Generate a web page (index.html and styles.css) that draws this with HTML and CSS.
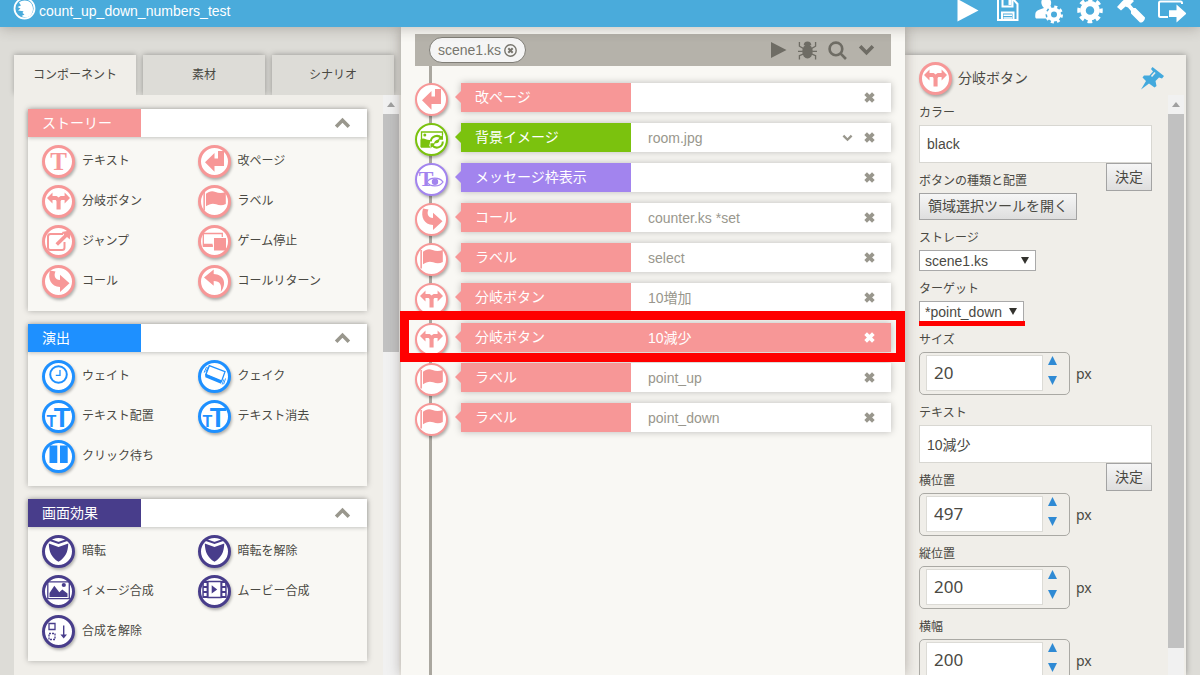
FILE: index.html
```html
<!DOCTYPE html>
<html lang="ja">
<head>
<meta charset="utf-8">
<title>count_up_down_numbers_test</title>
<link rel="stylesheet" href="styles.css">
</head>
<body>
<svg class="defs" aria-hidden="true">
  <symbol id="i-page" viewBox="3 3 27 27"><path d="M7 17.3L16.5 8V13.5H20V6H26V21H16.5V26.7Z"/></symbol>
  <symbol id="i-branch" viewBox="3 3 27 27"><path d="M5 13L10.5 7.6V11H13.6c1.3 0 2.2.7 3 1.6.8-.9 1.700-1.600 3-1.600H22.600V7.600L28 13l-5.400 5.400V15H20.200c-1.100 0-1.600.6-1.600 1.600V24.500H14.500V16.600c0-1-.5-1.600-1.600-1.600H10.500v3.400Z"/></symbol>
  <symbol id="i-flag" viewBox="3 3 27 27"><path d="M5.400 7H6.900V25.500H5.400ZM8 8.800c3-2.600 6.200-3.200 9.500-1.800 3.400 1.300 6.500 1.300 10.300 0V19c-3.400 1.700-6.600 1.400-9.600.3-3.600-1.300-6.800-.4-10.200 2Z"/></symbol>
  <symbol id="i-jump" viewBox="3 3 27 27"><path class="line" d="M21 9H8.500a2.500 2.500 0 0 0-2.500 2.500V22.500a2.500 2.500 0 0 0 2.500 2.500H20a2.500 2.500 0 0 0 2.500-2.500V17"/><path d="M13.500 18.300L22.200 9.800L19.800 7L29 5.300L27.800 14.500L25 12L16 20.800Z"/></symbol>
  <symbol id="i-stop" viewBox="3 3 27 27"><path class="thin" d="M24.300 12V8.500H5.300V21H15"/><path d="M5 18.800H14.600V22H5ZM16 13H28V25.500H16Z"/></symbol>
  <symbol id="i-call" viewBox="3 3 27 27"><path d="M8 5.500C5.500 14 9 21.500 18 22V27L27.500 18.300L18 9.700V15C13 15 11.500 10.500 13.500 6.500Z"/></symbol>
  <symbol id="i-return" viewBox="3 3 27 27"><path d="M6 12.500L15.700 4.500V9C25.500 9.500 29.500 18 22.800 27C24 19.500 22 16 15.700 16V20.800Z"/></symbol>
  <symbol id="i-clock" viewBox="3 3 27 27"><circle class="line" cx="16.500" cy="14.500" r="8.300"/><path class="thin" d="M18 10V15.400H13.800"/></symbol>
  <symbol id="i-quake" viewBox="3 3 27 27"><path class="thin" d="M11.300 5.700L27 11.600L23.500 21.500L7.800 14.800Z"/><path d="M7.300 13.400L24.200 20.400L23 23.800L7.300 17.200ZM5.600 12.500L8.200 6.800L8.900 7.200L6.500 12.800ZM7.400 12L9.900 6.500L10.500 6.800L8.100 12.500ZM26 24.500L28 18.500L27.300 18.300L25.200 24ZM24.300 24.800L26.300 19.500L25.600 19.200L23.600 24.500Z"/></symbol>
  <symbol id="i-pause" viewBox="3 3 27 27"><path d="M7.500 5.500H15.300V23H7.500ZM18 5.500H25.700V23H18Z"/></symbol>
  <symbol id="i-shield" viewBox="3 3 27 27"><path class="line" d="M8 5L16.500 8L25 5"/><path d="M6.800 8.500L16.500 12L26.300 8.500C26 17 23.500 22.500 16.500 26.800C9.500 22.500 7 17 6.800 8.500Z"/></symbol>
  <symbol id="i-image" viewBox="3 3 27 27"><path class="thin" d="M5.800 6.800H27.300V23.600H5.800Z"/><path d="M7.500 22V18L12.300 10.800L17.300 17.200L20.300 14.500L25.500 18.500V22Z"/><circle cx="21.800" cy="10" r="2.100"/></symbol>
  <symbol id="i-movie" viewBox="3 3 27 27"><path class="thin" d="M10 6.500H23V22.500H10Z"/><path fill-rule="evenodd" d="M4.300 6H10V23H4.300ZM5.800 8V11H8.600V8ZM5.800 13V16H8.600V13ZM5.800 18V21H8.600V18ZM23 6H28.700V23H23ZM24.400 8V11H27.200V8ZM24.400 13V16H27.200V13ZM24.400 18V21H27.200V18ZM13.700 10.200L19.200 14.400L13.700 18.600Z"/></symbol>
  <symbol id="i-remove" viewBox="3 3 27 27"><path class="thin" d="M7 8.500H13V14.500H7Z"/><path class="thin" stroke-dasharray="2 1" d="M7 18.500H13V24.500H7Z"/><path d="M21 10.500H22.400V19.500H25L21.700 23.500L18.400 19.500H21Z"/></symbol>
  <symbol id="i-bg" viewBox="3 3 27 27"><path class="thin" d="M15 24H6.500V9H27.500V12"/><circle cx="9.800" cy="12" r="1.500"/><path d="M5.500 16.500C9 14 11 17.500 15 17V19.500L14 24H5.500Z"/><path class="line" d="M15.800 18.500a6 6 0 0 1 10.500-3.500M27.800 18.500a6 6 0 0 1-10.500 4"/><path d="M28 11.500V16.800H22.500ZM15.500 25.500V20.300H20.500Z"/><path d="M19 20c1-3 3-3.500 5.500-3.500c0 3-2 4.500-5.500 3.500Z"/></symbol>
  <symbol id="i-up" viewBox="0 0 16 11"><path class="heavy" d="M2 9L8 3L14 9"/></symbol>
  <symbol id="i-down" viewBox="0 0 16 11"><path class="heavy" d="M2 2L8 8L14 2"/></symbol>
  <symbol id="i-x" viewBox="0 0 10 10"><path class="heavy" d="M1.500 1.500L8.500 8.500M8.500 1.500L1.500 8.500"/></symbol>
</svg>

<div class="app">
  <header class="topbar">
    <h1 class="project">
      <svg class="logo" viewBox="0 0 24 22" aria-hidden="true"><circle cx="11.500" cy="8.500" r="10" fill="none" stroke="#fff" stroke-width="1.800"/><path d="M6 2.500C9 0 14-.5 18 3C21 7 20.500 13 17 16C14 18 11 17.500 8.500 16L11.500 14.500L9.500 13L10.500 11.200L5 10.500L7.500 8.500L4.500 7L8 5.500Z" fill="#fff"/></svg>
      <span>count_up_down_numbers_test</span>
    </h1>
    <nav class="tools" aria-label="ツール">
      <button type="button" aria-label="再生"><svg viewBox="0 0 28 24"><path d="M4.500-1L25.500 10.500L4.500 21.500Z"/></svg></button>
      <button type="button" aria-label="保存"><svg viewBox="0 0 28 24"><path class="w" d="M4-1H19L23.500 4V20H4Z"/><path class="w" d="M8 20V12.500H19.500V20M8.500-1V6.500H18.500V-1"/><path d="M14.500 0H17.500V5H14.500ZM9.500 14.500H18V16H9.500ZM9.500 17.300H18V18.700H9.500Z"/></svg></button>
      <button type="button" aria-label="ユーザー設定"><svg viewBox="0 0 28 24"><path d="M9 8C5.500 5 5-1 10-3C15-2 18 1 15 7L13 9C11 12 12 16 14 18.500H2C0 18.500 0 17 .5 13C1.500 10 5 9.500 9 8Z"/><g transform="translate(19 14.500)"><circle r="8.500" fill="#4aabdb"/><circle r="5" fill="none" stroke="#fff" stroke-width="4"/><circle r="7.500" fill="none" stroke="#fff" stroke-width="3" stroke-dasharray="3 2.890"/></g></svg></button>
      <button type="button" aria-label="設定"><svg viewBox="0 0 28 24"><g transform="translate(14 10.500)"><circle r="7" fill="none" stroke="#fff" stroke-width="5.500"/><circle r="11" fill="none" stroke="#fff" stroke-width="3.500" stroke-dasharray="4.700 3.940" stroke-dashoffset="2.350"/></g></svg></button>
      <button type="button" aria-label="ビルド"><svg viewBox="0 0 28 24"><path d="M0 7L5 1.500L11-4L17 1L13.500 4.500L16.500 8L18.500 8L28 17.500C28 20.500 25.500 23 23 22.500L14 13.500V11L11 7.500L8.500 6.500L4 10.500Z"/></svg></button>
      <button type="button" aria-label="終了"><svg viewBox="0 0 28 24"><path class="w" d="M10 17H2.500C1.500 17 1 16.500 1 15.500V3C1 2 1.500 1.500 2.500 1.500H22.500C23.500 1.500 24 2 24 3V4"/><path d="M11 10.300H18.500V4.500L28.500 13.500L18.500 22.500V17H11Z"/></svg></button>
    </nav>
  </header>

  <main class="workspace">
    <section class="palette" aria-label="コンポーネント">
      <div class="tabs" role="tablist">
        <button type="button" class="tab tab-active" role="tab" aria-selected="true">コンポーネント</button>
        <button type="button" class="tab" role="tab" aria-selected="false">素材</button>
        <button type="button" class="tab" role="tab" aria-selected="false">シナリオ</button>
      </div>
      <div class="palette-body">
        <div class="groups">
          <section class="group story">
            <div class="group-head"><h2>ストーリー</h2><button type="button" aria-label="閉じる"><svg class="chev"><use href="#i-up"/></svg></button></div>
            <ul class="items">
              <li><span class="badge"><svg viewBox="3 3 27 27"><text class="serif-t" x="16.500" y="24.500" text-anchor="middle" font-size="25">T</text></svg></span>テキスト</li>
              <li><span class="badge"><svg><use href="#i-page"/></svg></span>改ページ</li>
              <li><span class="badge"><svg><use href="#i-branch"/></svg></span>分岐ボタン</li>
              <li><span class="badge"><svg><use href="#i-flag"/></svg></span>ラベル</li>
              <li><span class="badge"><svg><use href="#i-jump"/></svg></span>ジャンプ</li>
              <li><span class="badge"><svg><use href="#i-stop"/></svg></span>ゲーム停止</li>
              <li><span class="badge"><svg><use href="#i-call"/></svg></span>コール</li>
              <li><span class="badge"><svg><use href="#i-return"/></svg></span>コールリターン</li>
            </ul>
          </section>
          <section class="group stage">
            <div class="group-head"><h2>演出</h2><button type="button" aria-label="閉じる"><svg class="chev"><use href="#i-up"/></svg></button></div>
            <ul class="items">
              <li><span class="badge"><svg><use href="#i-clock"/></svg></span>ウェイト</li>
              <li><span class="badge"><svg><use href="#i-quake"/></svg></span>クェイク</li>
              <li><span class="badge"><svg viewBox="3 3 27 27"><text class="sans-t" x="9.500" y="26.500" text-anchor="middle" font-size="16">T</text><text class="sans-t" x="20" y="26.500" text-anchor="middle" font-size="27">T</text></svg></span>テキスト配置</li>
              <li><span class="badge"><svg viewBox="3 3 27 27"><text class="sans-t" x="9.500" y="26.500" text-anchor="middle" font-size="16">T</text><text class="sans-t" x="20" y="26.500" text-anchor="middle" font-size="27">T</text></svg></span>テキスト消去</li>
              <li><span class="badge"><svg><use href="#i-pause"/></svg></span>クリック待ち</li>
            </ul>
          </section>
          <section class="group effect">
            <div class="group-head"><h2>画面効果</h2><button type="button" aria-label="閉じる"><svg class="chev"><use href="#i-up"/></svg></button></div>
            <ul class="items">
              <li><span class="badge"><svg><use href="#i-shield"/></svg></span>暗転</li>
              <li><span class="badge"><svg><use href="#i-shield"/></svg></span>暗転を解除</li>
              <li><span class="badge"><svg><use href="#i-image"/></svg></span>イメージ合成</li>
              <li><span class="badge"><svg><use href="#i-movie"/></svg></span>ムービー合成</li>
              <li><span class="badge"><svg><use href="#i-remove"/></svg></span>合成を解除</li>
            </ul>
          </section>
        </div>
        <div class="scrollbar"><span class="scroll-up"></span><span class="thumb thumb-short"></span></div>
      </div>
    </section>

    <section class="scene" aria-label="シーン">
      <div class="scene-bar">
        <span class="file">scene1.ks <button type="button" aria-label="scene1.ksを閉じる"><svg viewBox="0 0 13 13"><circle cx="6.500" cy="6.500" r="5.700" fill="none" stroke-width="1.400"/><path d="M4.300 4.300L8.700 8.700M8.700 4.300L4.300 8.700" stroke-width="2"/></svg></button></span>
        <div class="scene-tools">
          <button type="button" aria-label="プレビュー"><svg class="play" viewBox="0 0 16 18"><path d="M0 1L15.500 9L0 17Z"/></svg></button>
          <button type="button" aria-label="デバッグ"><svg viewBox="0 0 20 20"><ellipse cx="10" cy="11" rx="5.500" ry="7.500"/><path d="M6 4.500a4 4 0 0 1 8 0Z"/><path class="leg" d="M1.500 1V5.500L6 8M0 11H5M1.500 19.500V15.500L6 13.500M18.500 1V5.500L14 8M20 11H15M18.500 19.500V15.500L14 13.500"/></svg></button>
          <button type="button" aria-label="検索"><svg viewBox="0 0 18 18"><circle class="ring" cx="7.500" cy="7.500" r="6"/><path class="ring" d="M12 12L17 17"/></svg></button>
          <button type="button" aria-label="メニュー"><svg class="chev"><use href="#i-down"/></svg></button>
        </div>
      </div>
      <ol class="steps">
        <li class="step story"><span class="badge"><svg><use href="#i-page"/></svg></span><div class="step-card"><span class="tag">改ページ</span><span class="value"></span><button type="button" aria-label="削除"><svg class="x"><use href="#i-x"/></svg></button></div></li>
        <li class="step back"><span class="badge"><svg><use href="#i-bg"/></svg></span><div class="step-card"><span class="tag">背景イメージ</span><span class="value">room.jpg</span><button type="button" aria-label="開く"><svg class="chev-small"><use href="#i-down"/></svg></button><button type="button" aria-label="削除"><svg class="x"><use href="#i-x"/></svg></button></div></li>
        <li class="step message"><span class="badge"><svg viewBox="3 3 27 27"><text class="serif-t" x="11" y="23" text-anchor="middle" font-size="22">T</text><path class="eye" d="M12 19C15 13.800 24.500 13.800 28 19C24.500 24.200 15 24.200 12 19Z"/><circle cx="20" cy="18.800" r="3.200"/></svg></span><div class="step-card"><span class="tag">メッセージ枠表示</span><span class="value"></span><button type="button" aria-label="削除"><svg class="x"><use href="#i-x"/></svg></button></div></li>
        <li class="step story"><span class="badge"><svg><use href="#i-call"/></svg></span><div class="step-card"><span class="tag">コール</span><span class="value">counter.ks *set</span><button type="button" aria-label="削除"><svg class="x"><use href="#i-x"/></svg></button></div></li>
        <li class="step story"><span class="badge"><svg><use href="#i-flag"/></svg></span><div class="step-card"><span class="tag">ラベル</span><span class="value">select</span><button type="button" aria-label="削除"><svg class="x"><use href="#i-x"/></svg></button></div></li>
        <li class="step story"><span class="badge"><svg><use href="#i-branch"/></svg></span><div class="step-card"><span class="tag">分岐ボタン</span><span class="value">10増加</span><button type="button" aria-label="削除"><svg class="x"><use href="#i-x"/></svg></button></div></li>
        <li class="step story selected"><span class="badge"><svg><use href="#i-branch"/></svg></span><div class="step-card"><span class="tag">分岐ボタン</span><span class="value">10減少</span><button type="button" aria-label="削除"><svg class="x"><use href="#i-x"/></svg></button></div></li>
        <li class="step story"><span class="badge"><svg><use href="#i-flag"/></svg></span><div class="step-card"><span class="tag">ラベル</span><span class="value">point_up</span><button type="button" aria-label="削除"><svg class="x"><use href="#i-x"/></svg></button></div></li>
        <li class="step story"><span class="badge"><svg><use href="#i-flag"/></svg></span><div class="step-card"><span class="tag">ラベル</span><span class="value">point_down</span><button type="button" aria-label="削除"><svg class="x"><use href="#i-x"/></svg></button></div></li>
      </ol>
    </section>

    <section class="inspector" aria-label="分岐ボタン">
      <div class="inspector-panel">
        <div class="inspector-head story">
          <span class="badge"><svg><use href="#i-branch"/></svg></span>
          <h2>分岐ボタン</h2>
          <button type="button" class="pin" aria-label="固定"><svg viewBox="0 0 24 24"><path d="M12.500 1L24 10L22 12.500L19 11.500L15.500 15L16.500 20L14.500 21.500L9 17.500L1 23.500L6 15L2.500 11.500L4 9.500L9.500 9.500L13 5.500L11 3Z"/><path d="M11.500 10.500L15 6.500" stroke="#f0eee9" stroke-width="1.600"/></svg></button>
        </div>
        <div class="inspector-body">
          <form class="fields">
            <div class="field"><label for="color">カラー</label><input class="text" id="color" type="text" value="black"><button type="button" class="btn commit">決定</button></div>
            <div class="field"><label for="area">ボタンの種類と配置</label><button type="button" class="btn" id="area">領域選択ツールを開く</button></div>
            <div class="field"><label for="storage">ストレージ</label><span class="pick pick-wide"><select id="storage"><option>scene1.ks</option></select></span></div>
            <div class="field"><label for="target">ターゲット</label><span class="pick pick-marked"><select id="target"><option>*point_down</option></select></span></div>
            <div class="field"><label for="size">サイズ</label><div class="measure"><span class="spin"><input id="size" type="text" inputmode="numeric" value="20"><span class="arrows"><button type="button" aria-label="増やす"><svg viewBox="0 0 9 9"><path d="M0 9L4.500 0L9 9Z"/></svg></button><button type="button" aria-label="減らす"><svg viewBox="0 0 9 9"><path d="M0 0H9L4.500 9Z"/></svg></button></span></span><span>px</span></div></div>
            <div class="field"><label for="caption">テキスト</label><input class="text" id="caption" type="text" value="10減少"><button type="button" class="btn commit">決定</button></div>
            <div class="field"><label for="left">横位置</label><div class="measure"><span class="spin"><input id="left" type="text" inputmode="numeric" value="497"><span class="arrows"><button type="button" aria-label="増やす"><svg viewBox="0 0 9 9"><path d="M0 9L4.500 0L9 9Z"/></svg></button><button type="button" aria-label="減らす"><svg viewBox="0 0 9 9"><path d="M0 0H9L4.500 9Z"/></svg></button></span></span><span>px</span></div></div>
            <div class="field"><label for="top">縦位置</label><div class="measure"><span class="spin"><input id="top" type="text" inputmode="numeric" value="200"><span class="arrows"><button type="button" aria-label="増やす"><svg viewBox="0 0 9 9"><path d="M0 9L4.500 0L9 9Z"/></svg></button><button type="button" aria-label="減らす"><svg viewBox="0 0 9 9"><path d="M0 0H9L4.500 9Z"/></svg></button></span></span><span>px</span></div></div>
            <div class="field"><label for="width">横幅</label><div class="measure"><span class="spin"><input id="width" type="text" inputmode="numeric" value="200"><span class="arrows"><button type="button" aria-label="増やす"><svg viewBox="0 0 9 9"><path d="M0 9L4.500 0L9 9Z"/></svg></button><button type="button" aria-label="減らす"><svg viewBox="0 0 9 9"><path d="M0 0H9L4.500 9Z"/></svg></button></span></span><span>px</span></div></div>
          </form>
          <div class="scrollbar"><span class="scroll-up"></span><span class="thumb thumb-long"></span></div>
        </div>
      </div>
    </section>
  </main>
</div>
</body>
</html>
```

FILE: styles.css
```css
* { box-sizing: border-box; }

body {
  margin: 0;
  color: #4a4943;
  font: 14px/20px "Liberation Sans", "Noto Sans CJK JP", sans-serif;
}

button, input, select { font: inherit; color: inherit; margin: 0; }
button { border: 0; padding: 0; background: none; cursor: pointer; }
svg { display: block; fill: currentColor; }
h1, h2 { margin: 0; font-size: 14px; font-weight: 400; }
ul, ol { margin: 0; padding: 0; list-style: none; }

.defs { position: absolute; width: 0; height: 0; }
.line { fill: none; stroke: currentColor; stroke-width: 2; }
.thin { fill: none; stroke: currentColor; stroke-width: 1.3; }
.heavy { fill: none; stroke: currentColor; stroke-width: 3.4; }
.eye { fill: #fff; stroke: currentColor; stroke-width: 1.3; }
.serif-t { font-family: "Liberation Serif", serif; font-weight: 700; }
.sans-t { font-family: "Liberation Sans", sans-serif; font-weight: 700; }

.story { --tone: #f79797; }
.stage { --tone: #1e90ff; }
.effect { --tone: #483d8b; }
.back { --tone: #7bc20e; }
.message { --tone: #a284ee; }

.app {
  display: flex;
  flex-direction: column;
  height: 100vh;
  overflow: hidden;
  background: #dddcd7;
}

/* top bar */
.topbar {
  position: relative;
  z-index: 3;
  display: flex;
  justify-content: space-between;
  align-items: flex-start;
  flex: none;
  height: 27px;
  padding: 0 14px 0 13px;
  background: #4aabdb;
  color: #fff;
  box-shadow: 0 1px 14px rgba(60, 50, 40, 0.3);
}
.project { display: flex; gap: 2px; line-height: 23px; }
.logo { width: 24px; height: 22px; }
.tools { display: flex; gap: 13px; }
.tools svg { width: 28px; height: 24px; }
.w { fill: none; stroke: currentColor; stroke-width: 2; }

.workspace {
  flex: 1;
  min-height: 0;
  display: grid;
  grid-template-columns: minmax(0, 401fr) minmax(0, 504fr) minmax(0, 295fr);
}

.badge {
  flex: none;
  display: flex;
  align-items: center;
  justify-content: center;
  width: 33px;
  height: 33px;
  border: 3px solid var(--tone);
  border-radius: 50%;
  background: #fff;
  color: var(--tone);
  box-shadow: 1px 2px 3px rgba(0, 0, 0, 0.3);
}
.badge svg { flex: none; width: 27px; height: 27px; }

/* component palette */
.palette {
  display: flex;
  flex-direction: column;
  min-height: 0;
  padding: 28px 0 0 14px;
}
.tabs { display: flex; gap: 7px; padding-right: 7px; }
.tab {
  flex: 1;
  height: 40px;
  background: #dddcd7;
  font-size: 12px;
  box-shadow: 0 0 6px rgba(0, 0, 0, 0.35);
}
.tab-active { background: #f0eee9; box-shadow: 0 -1px 5px rgba(0, 0, 0, 0.25); }
.palette-body {
  position: relative;
  flex: 1;
  min-height: 0;
  display: flex;
  justify-content: space-between;
  background: #f0eee9;
  padding-right: 2px;
}
.groups {
  flex: 1;
  display: flex;
  flex-direction: column;
  gap: 13px;
  padding: 14px 16px 0 14px;
}
.group { background: #f9f8f4; box-shadow: 0 0 6px rgba(0, 0, 0, 0.28); }
.group-head {
  display: flex;
  justify-content: space-between;
  align-items: center;
  height: 28px;
  padding-right: 16px;
  background: #fff;
  color: #99978d;
  box-shadow: 0 1px 4px rgba(0, 0, 0, 0.22);
}
.group-head h2 {
  width: 113px;
  padding-left: 14px;
  background: var(--tone);
  color: #fff;
  line-height: 28px;
}
.chev { width: 17px; height: 12px; }
.items {
  display: grid;
  grid-template-columns: 1fr 1fr;
  grid-auto-rows: 40px;
  padding: 4px 14px 10px;
}
.items li { display: flex; align-items: center; gap: 7px; font-size: 12px; }

.scrollbar {
  flex: none;
  display: flex;
  flex-direction: column;
  width: 16px;
  background: #f1f1f1;
}
.scroll-up { display: grid; place-items: center; height: 19px; }
.scroll-up::before {
  content: "";
  border: 4px solid transparent;
  border-top: 0;
  border-bottom: 5px solid #a0a0a0;
}
.thumb { background: #c1c1c1; }
.thumb-short { height: 41%; }
.thumb-long { height: 92%; }

/* scene timeline */
.scene {
  position: relative;
  z-index: 2;
  display: flex;
  flex-direction: column;
  min-height: 0;
  padding: 7px 14px 0;
  background: #f9f8f4;
  box-shadow: 0 0 12px rgba(60, 50, 40, 0.35);
}
.scene-bar {
  display: flex;
  justify-content: space-between;
  align-items: center;
  height: 32px;
  padding: 0 16px 0 14px;
  background: #b5b2aa;
}
.file {
  display: flex;
  align-items: center;
  gap: 3px;
  height: 26px;
  padding: 0 8px;
  border: 1px solid #807e77;
  border-radius: 13px;
  background: #f5f5f5;
  color: #77756d;
}
.file svg { width: 13px; height: 13px; stroke: currentColor; }
.scene-tools { display: flex; align-items: center; gap: 11px; color: #6e6c64; }
.scene-tools svg { width: 19px; height: 19px; }
.scene-tools .play { width: 16px; height: 18px; }
.scene-tools .chev { width: 17px; height: 12px; }
.leg { fill: none; stroke: currentColor; stroke-width: 1.4; }
.ring { fill: none; stroke: currentColor; stroke-width: 2.5; }
.steps {
  flex: 1;
  min-height: 0;
  display: flex;
  flex-direction: column;
  gap: 7px;
  padding-top: 17px;
  background: linear-gradient(#aaa79f, #aaa79f) 14px 0 / 3px 100% no-repeat;
}
.step { position: relative; display: flex; align-items: flex-start; gap: 13px; height: 33px; flex: none; }
.step .badge { border-width: 2px; }
.step-card {
  position: relative;
  flex: 1;
  display: flex;
  align-items: center;
  height: 29px;
  padding-right: 16px;
  background: #fff;
  color: #99978d;
  box-shadow: 0 0 7px rgba(0, 0, 0, 0.25);
}
.step-card::before {
  content: "";
  position: absolute;
  left: -6px;
  top: 8px;
  border: 6px solid transparent;
  border-left: 0;
  border-right-color: var(--tone);
}
.tag {
  flex: none;
  width: 170px;
  padding-left: 14px;
  background: var(--tone);
  color: #fff;
  line-height: 29px;
}
.value { flex: 1; padding-left: 17px; }
.step-card button { padding-left: 11px; }
.x { width: 11px; height: 11px; }
.chev-small { width: 11px; height: 8px; }
.selected { z-index: 1; }
.selected .step-card { background: var(--tone); color: #fff; }
.selected::after {
  content: "";
  position: absolute;
  inset: -12px -14px -6px -15px;
  border: 9px solid #f00;
}

/* inspector */
.inspector { display: flex; min-height: 0; padding: 28px 14px 0 0; }
.inspector-panel {
  flex: 1;
  display: flex;
  flex-direction: column;
  min-height: 0;
  padding: 0 2px 0 14px;
  background: #f0eee9;
  box-shadow: 0 0 6px rgba(0, 0, 0, 0.35);
}
.inspector-head { display: flex; align-items: center; gap: 6px; height: 40px; padding: 6px 20px 0 0; }
.inspector-head h2 { flex: 1; }
.pin { color: #43a9dd; }
.pin svg { width: 24px; height: 24px; }
.inspector-body { flex: 1; min-height: 0; display: flex; gap: 16px; }
.fields { flex: 1; padding-top: 7px; }
.field { margin-bottom: 7px; }
.field label { display: block; height: 23px; font-size: 12px; line-height: 23px; }
.text {
  display: block;
  width: 100%;
  height: 38px;
  padding: 0 7px;
  border: 1px solid #d8d7d2;
  background: #fff;
}
.btn {
  display: block;
  height: 27px;
  padding: 0 8px;
  border: 1px solid #a3a3a3;
  background: linear-gradient(#f6f6f6, #dedede);
  line-height: 23px;
}
.commit { float: right; height: 28px; }
.pick { position: relative; display: block; width: 105px; }
.pick-wide { width: 117px; }
.pick select {
  appearance: none;
  display: block;
  width: 100%;
  height: 21px;
  padding: 0 5px;
  border: 1px solid #a9a9a9;
  border-radius: 0;
  background: #fff;
}
.pick::after {
  content: "";
  position: absolute;
  right: 7px;
  top: 7px;
  border: 4px solid transparent;
  border-top: 7px solid #33322e;
  border-bottom: 0;
  pointer-events: none;
}
.pick-marked::before {
  content: "";
  position: absolute;
  inset: auto -1px -4px 0;
  height: 5px;
  background: #f00;
}
.measure { display: flex; align-items: center; gap: 6px; font-family: "Noto Sans", sans-serif; }
.spin {
  display: flex;
  width: 151px;
  height: 43px;
  padding: 2px 12px 3px 6px;
  border: 1px solid #aaa9a4;
  border-radius: 5px;
}
.spin input {
  flex: 1;
  min-width: 0;
  padding: 0 7px;
  border: 1px solid #dcdbd6;
  background: #fff;
  font-size: 17px;
}
.arrows { display: flex; flex-direction: column; gap: 11px; padding: 1px 0 0 5px; }
.arrows svg { width: 9px; height: 9px; fill: #2f8ad4; }
```
